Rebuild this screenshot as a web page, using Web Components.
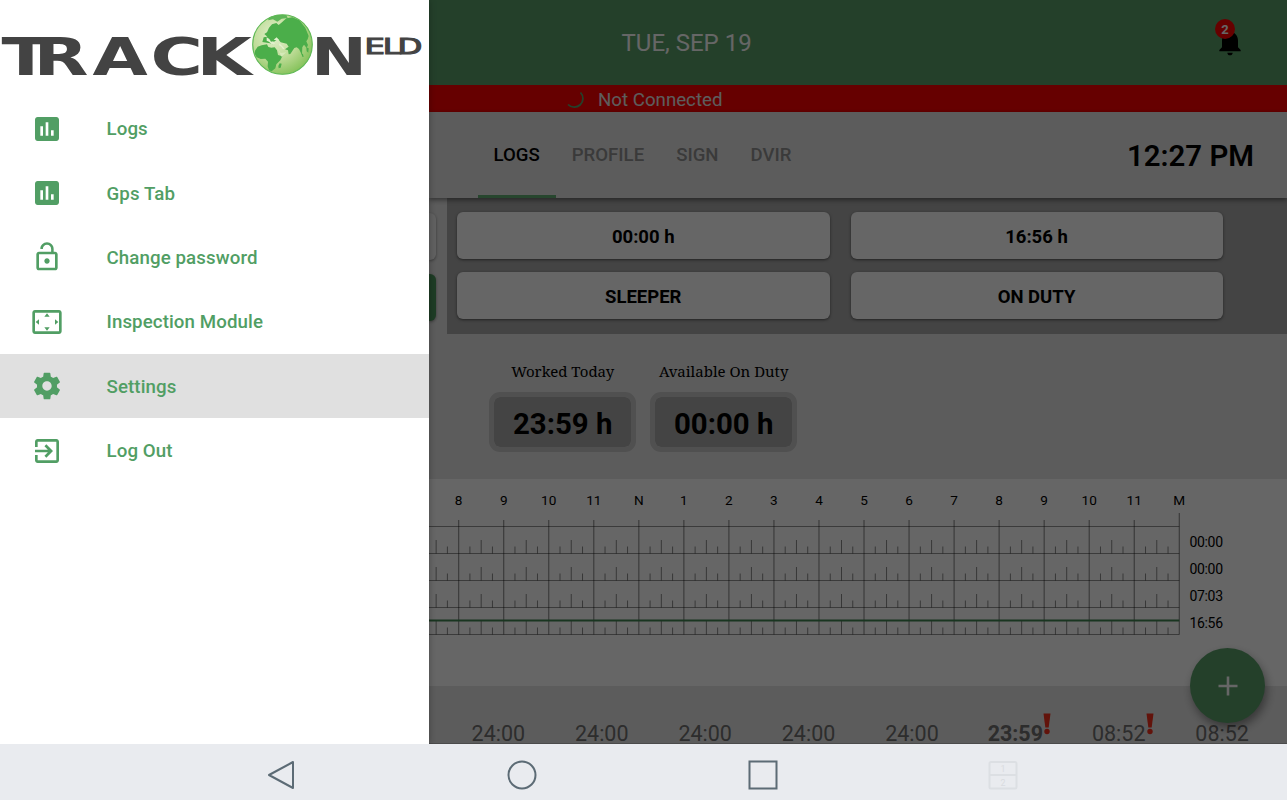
<!DOCTYPE html>
<html lang="en">
<head>
<meta charset="utf-8">
<title>TrackOn ELD</title>
<style>
    body {
        margin: 0;
        width: 1287px;
        height: 800px;
        overflow: hidden;
        font-family: Roboto, "Liberation Sans", sans-serif;
    }
</style>
</head>
<body>
<eld-app></eld-app>

<script>
const GREEN = '#519e64';

const ICONS = {
    chart: 'M19 3H5c-1.1 0-2 .9-2 2v14c0 1.1.9 2 2 2h14c1.1 0 2-.9 2-2V5c0-1.1-.9-2-2-2zM9 17H7v-7h2v7zm4 0h-2V7h2v10zm4 0h-2v-4h2v4z',
    lock: 'M12 17c1.1 0 2-.9 2-2s-.9-2-2-2-2 .9-2 2 .9 2 2 2zm6-9h-1V6c0-2.76-2.24-5-5-5S7 3.24 7 6h1.9c0-1.71 1.39-3.1 3.1-3.1 1.71 0 3.1 1.39 3.1 3.1v2H6c-1.1 0-2 .9-2 2v10c0 1.1.9 2 2 2h12c1.1 0 2-.9 2-2V10c0-1.1-.9-2-2-2zm0 12H6V10h12v10z',
    overscan: 'M12.01 5.5L10 8h4l-1.99-2.5zM18 10v4l2.5-1.99L18 10zM6 10l-2.5 2.01L6 14v-4zm8 6h-4l2.01 2.5L14 16zm7-13H3c-1.1 0-2 .9-2 2v14c0 1.1.9 2 2 2h18c1.1 0 2-.9 2-2V5c0-1.1-.9-2-2-2zm0 16.01H3V4.99h18v14.02z',
    gear: 'M19.43 12.98c.04-.32.07-.64.07-.98s-.03-.66-.07-.98l2.11-1.65c.19-.15.24-.42.12-.64l-2-3.46c-.12-.22-.39-.3-.61-.22l-2.49 1c-.52-.4-1.08-.73-1.69-.98l-.38-2.65C14.46 2.18 14.25 2 14 2h-4c-.25 0-.46.18-.49.42l-.38 2.65c-.61.25-1.17.59-1.69.98l-2.49-1c-.23-.09-.49 0-.61.22l-2 3.46c-.13.22-.07.49.12.64l2.11 1.65c-.04.32-.07.65-.07.98s.03.66.07.98l-2.11 1.65c-.19.15-.24.42-.12.64l2 3.46c.12.22.39.3.61.22l2.49-1c.52.4 1.08.73 1.69.98l.38 2.65c.03.24.24.42.49.42h4c.25 0 .46-.18.49-.42l.38-2.65c.61-.25 1.17-.59 1.69-.98l2.49 1c.23.09.49 0 .61-.22l2-3.46c.12-.22.07-.49-.12-.64l-2.11-1.65zM12 15.5c-1.93 0-3.5-1.57-3.5-3.5s1.57-3.5 3.5-3.5 3.5 1.57 3.5 3.5-1.57 3.5-3.5 3.5z',
    exit: 'M10.09 15.59L11.5 17l5-5-5-5-1.41 1.41L12.67 11H3v2h9.67l-2.58 2.59zM19 3H5c-1.11 0-2 .9-2 2v4h2V5h14v14H5v-4H3v4c0 1.1.89 2 2 2h14c1.1 0 2-.9 2-2V5c0-1.1-.9-2-2-2z',
    bell: 'M12 22c1.1 0 2-.9 2-2h-4c0 1.1.89 2 2 2zm6-6v-5c0-3.07-1.64-5.64-4.5-6.32V4c0-.83-.67-1.5-1.5-1.5s-1.5.67-1.5 1.5v.68C7.63 5.36 6 7.92 6 11v5l-2 2v1h16v-1l-2-2z'
};

class BaseElement extends HTMLElement {
    constructor() {
        super();
        this.attachShadow({ mode: 'open' });
    }
    connectedCallback() {
        this.shadowRoot.innerHTML = this.render();
    }
}

class MdIcon extends BaseElement {
    render() {
        return `
            <style>
                :host { display: block; width: 32px; height: 32px; }
                svg { display: block; width: 100%; height: 100%; fill: currentColor; }
            </style>
            <svg viewBox="0 0 24 24"><path d="${ICONS[this.getAttribute('name')]}"/></svg>
        `;
    }
}
customElements.define('md-icon', MdIcon);

class BrandLogo extends BaseElement {
    render() {
        return `
            <style>
                :host { display: block; height: 96.5px; }
                svg { display: block; }
                text { font-family: "DejaVu Sans", sans-serif; font-weight: bold; fill: #434343; }
            </style>
            <svg width="428" height="96" viewBox="0 0 428 96">
                <defs>
                    <radialGradient id="sea" cx="38%" cy="35%" r="70%">
                        <stop offset="0" stop-color="#e2f0cd"/>
                        <stop offset=".55" stop-color="#bfdc98"/>
                        <stop offset="1" stop-color="#83c158"/>
                    </radialGradient>
                    <clipPath id="disc"><circle cx="282.5" cy="44.5" r="30"/></clipPath>
                </defs>
                <text transform="translate(0 75) scale(1.4 1)" font-size="51" x="1 24 66 107.5 140.3">TRACK</text>
                <circle cx="282.5" cy="44.5" r="30" fill="url(#sea)"/>
                <g clip-path="url(#disc)">
                    <g transform="translate(240 10) scale(.3333)" fill="#4bae4a">
                        <path d="M45 122l8-12 12-4 16-3 4 8 9 2 10-1 7 9 3 14 13 4-6 12-12 12-3 12-11 9-8-3-4-12 1-14-8-9-14 1-12-5-6-11z"/>
                        <path d="M67 96l4-14 11-2-9-8 8-5 6-14 9-10 13-4 7 6 10-8 13-12 18-3 21 9 18 22 10 25-3 10-4 6 5 11-4 9-8-10-5 8-1 23-9-18-7-5-7 2-12 18-5 1-2-12-9-3 11-8-6-9-18-4-8-10-12 8-3 8-9-3z"/>
                        <path d="M85 22l20-9 34 2 4 9-18 2-13 9-13-7-14 3z" opacity=".85"/>
                        <path d="M119 160l6 1-3 12-6 2-1-7zM199 112l7 3-1 13-5-4zM184 130l5 2 2 9-4-1z"/>
                        <path d="M111 111l11 18 17-2-15 13z" fill="#d5e9b8"/>
                        <path d="M80 82l8 5 5 8 7-1 5 8-10 1-8-8-7-3zM101 89l9-7 7 8-8 1z" fill="#e2f0cd"/>
                        <path d="M117 100l6 4 11 12-5 2-5-8-7-4z" fill="#e2f0cd"/>
                    </g>
                </g>
                <circle cx="282.5" cy="44.5" r="29.8" fill="none" stroke="#5fb957" stroke-width="1.1"/>
                <text transform="translate(311 75) scale(1.31 1)" font-size="51">N</text>
                <text style="font-weight: normal" stroke="#434343" stroke-width="1.1" transform="translate(364.500 53.700) scale(1.5 1)" font-size="21.5" x="0 12.200 22">ELD</text>
            </svg>
        `;
    }
}
customElements.define('brand-logo', BrandLogo);

class DrawerItem extends BaseElement {
    render() {
        return `
            <style>
                :host {
                    display: flex;
                    align-items: center;
                    height: 64.4px;
                    box-sizing: border-box;
                    padding: 1px 0 0 31px;
                    color: ${GREEN};
                    font-size: 18.7px;
                    font-weight: 500;
                    letter-spacing: .1px;
                }
                :host([selected]) { background: #e0e0e0; }
                md-icon { margin: 0 43.5px 1px 0; }
            </style>
            <md-icon name="${this.getAttribute('icon')}"></md-icon>
            <span><slot></slot></span>
        `;
    }
}
customElements.define('drawer-item', DrawerItem);

class NavDrawer extends BaseElement {
    render() {
        return `
            <style>
                :host {
                    display: block;
                    width: 428.5px;
                    flex: none;
                    height: 744px;
                    background: #fff;
                    position: relative;
                    z-index: 2;
                    box-shadow: 0 0 7px rgba(0,0,0,.3);
                }
            </style>
            <brand-logo></brand-logo>
            <nav>
                <drawer-item icon="chart">Logs</drawer-item>
                <drawer-item icon="chart">Gps Tab</drawer-item>
                <drawer-item icon="lock">Change password</drawer-item>
                <drawer-item icon="overscan">Inspection Module</drawer-item>
                <drawer-item icon="gear" selected>Settings</drawer-item>
                <drawer-item icon="exit">Log Out</drawer-item>
            </nav>
        `;
    }
}
customElements.define('nav-drawer', NavDrawer);

class DateHeader extends BaseElement {
    render() {
        return `
            <style>
                :host {
                    display: flex;
                    justify-content: space-between;
                    align-items: center;
                    height: 85px;
                    box-sizing: border-box;
                    padding: 0 41px 0 193px;
                    background: #5aa06a;
                    color: #fff;
                }
                .date { font-size: 24px; padding-top: 1px; }
                .alerts { position: relative; color: #000; margin-bottom: 2px; }
                .count {
                    position: absolute;
                    top: -7px;
                    left: 1px;
                    width: 20px;
                    height: 20px;
                    border-radius: 50%;
                    background: #f00;
                    color: #fff;
                    font: bold 13px/21px Roboto, sans-serif;
                    text-align: center;
                }
            </style>
            <div class="date">TUE, SEP 19</div>
            <div class="alerts"><md-icon name="bell"></md-icon><span class="count">2</span></div>
        `;
    }
}
customElements.define('date-header', DateHeader);

class ConnectionBar extends BaseElement {
    render() {
        return `
            <style>
                :host {
                    display: flex;
                    align-items: center;
                    gap: 13px;
                    height: 27px;
                    padding-left: 138.5px;
                    background: #f00;
                    color: #e8e8e8;
                    font-size: 18.7px;
                }
                span { padding-top: 2px; }
            </style>
            <svg width="18" height="20" fill="none" stroke="#5aa06a" stroke-width="1.8"><path d="M13.500 3.500A8 8 0 0 1 1 15.500"/></svg>
            <span>Not Connected</span>
        `;
    }
}
customElements.define('connection-bar', ConnectionBar);

class TabBar extends BaseElement {
    render() {
        return `
            <style>
                :host {
                    display: flex;
                    height: 86px;
                    box-sizing: border-box;
                    padding: 0 33px 0 49px;
                    background: #e6e6e6;
                    box-shadow: 0 2px 5px rgba(0,0,0,.45);
                    position: relative;
                    z-index: 1;
                }
                .tab {
                    display: flex;
                    align-items: center;
                    padding: 3px 16px 0;
                    border-bottom: 3px solid transparent;
                    font-size: 18.6px;
                    font-weight: 500;
                    color: #929292;
                }
                .tab.active { color: #000; border-color: #61ae74; }
                .clock { margin: auto 0 auto auto; padding-top: 2px; font-size: 29.4px; font-weight: 600; }
            </style>
            <div class="tab active">LOGS</div>
            <div class="tab">PROFILE</div>
            <div class="tab">SIGN</div>
            <div class="tab">DVIR</div>
            <div class="clock">12:27 PM</div>
        `;
    }
}
customElements.define('tab-bar', TabBar);

class DutyPanel extends BaseElement {
    render() {
        return `
            <style>
                :host { display: flex; height: 136px; background: #e6e6e6; }
                .edge { width: 18px; display: grid; grid-template-rows: 47px 47px; row-gap: 14px; padding-top: 15px; box-sizing: border-box; }
                .edge i { width: 7px; border-radius: 0 6px 6px 0; background: #f2f2f2; box-shadow: 0 1px 3px rgba(0,0,0,.4); }
                .edge i + i { background: #4b965c; }
                .grid {
                    flex: 1;
                    display: grid;
                    grid-template-columns: 372.5px 372px;
                    grid-template-rows: 47px 47px;
                    gap: 13px 21px;
                    padding: 14px 0 0 10.500px;
                    background: #aaa;
                }
                .cell {
                    display: flex;
                    align-items: center;
                    justify-content: center;
                    border-radius: 6px;
                    background: #fff;
                    box-shadow: 0 1px 3px rgba(0,0,0,.5);
                    font-size: 18.5px;
                    font-weight: bold;
                    padding-top: 2px;
                    box-sizing: border-box;
                }
            </style>
            <div class="edge"><i></i><i></i></div>
            <div class="grid">
                <div class="cell">00:00 h</div>
                <div class="cell">16:56 h</div>
                <div class="cell">SLEEPER</div>
                <div class="cell">ON DUTY</div>
            </div>
        `;
    }
}
customElements.define('duty-panel', DutyPanel);

class HourCounter extends BaseElement {
    render() {
        return `
            <style>
                :host { display: flex; flex-direction: column; align-items: center; width: 147px; }
                .label { height: 31px; white-space: nowrap; font: 15px/20px "Noto Serif", "DejaVu Serif Condensed", "DejaVu Serif", serif; }
                .value {
                    width: 137px;
                    height: 50px;
                    border: 5px solid #c7c7c7;
                    border-radius: 11px;
                    background: #aaa;
                    background-clip: padding-box;
                    font-size: 29.4px;
                    font-weight: bold;
                    line-height: 54px;
                    text-align: center;
                }
            </style>
            <div class="label">${this.getAttribute('label')}</div>
            <div class="value"><slot></slot></div>
        `;
    }
}
customElements.define('hour-counter', HourCounter);

class DutyGraph extends BaseElement {
    render() {
        const names = ['7', '8', '9', '10', '11', 'N', '1', '2', '3', '4', '5', '6', '7', '8', '9', '10', '11', 'M'];
        const totals = ['00:00', '00:00', '07:03', '16:56'];
        const step = 45.04;
        const right = 750.3;
        const top = 47.5;
        const row = 27;
        let lines = '';
        let ticks = '';
        let labels = '';

        for (let r = 0; r <= 4; r++) {
            lines += `<path d="M0 ${top + r * row}H${right}"/>`;
        }
        names.forEach((name, i) => {
            const x = right - (names.length - 1 - i) * step;
            const last = name === 'M';
            if (i > 0) {
                labels += `<text x="${x}" y="25.600" text-anchor="middle">${name}</text>`;
                lines += `<path d="M${x} ${last ? 34 : 41}V${top + 4 * row}"/>`;
            }
            if (last) return;
            // quarter-hour marks stand on the bottom of each row
            for (let r = 1; r <= 4; r++) {
                const y = top + r * row;
                for (let q = 1; q < 4; q++) {
                    ticks += `<path d="M${x + q * step / 4} ${y}v${q === 2 ? -13.5 : -7}"/>`;
                }
            }
        });
        totals.forEach((t, i) => {
            labels += `<text x="760.500" y="${68.3 + i * 26.8}" style="font-size:14px" textLength="33.500">${t}</text>`;
        });

        return `
            <style>
                :host { display: block; height: 207px; background: #fff; }
                svg { display: block; }
                text { font-size: 13.6px; fill: #000; }
            </style>
            <svg width="858" height="207">
                <g stroke="#000" stroke-opacity=".42" stroke-width="1.2">${lines}</g>
                <g stroke="#000" stroke-opacity=".46">${ticks}</g>
                <path d="M0 141.500H${right}" stroke="#3f8450" stroke-width="2"/>
                ${labels}
            </svg>
        `;
    }
}
customElements.define('duty-graph', DutyGraph);

class DayStrip extends BaseElement {
    render() {
        const days = [['24:00'], ['24:00'], ['24:00'], ['24:00'], ['24:00'], ['23:59', 'today warn'], ['08:52', 'warn'], ['08:52']];
        const mark = '<svg width="8" height="22" fill="#f5301c"><path d="M.5 .5h7L5.700 14.500H2.300z"/><circle cx="4" cy="18.500" r="2.700"/></svg>';
        return `
            <style>
                :host {
                    display: grid;
                    grid-template-columns: repeat(8, 103.4px);
                    height: 58px;
                    padding-left: 18.200px;
                    background: #e6e6e6;
                    overflow: hidden;
                    box-sizing: border-box;
                    border-bottom: 1px solid #bbb;
                }
                .day { text-align: center; padding-top: 34.5px; font-size: 21.500px; line-height: 26px; color: #707070; }
                .today { font-weight: bold; }
                .day span { position: relative; }
                svg { position: absolute; left: 100%; top: -8px; }
            </style>
            ${days.map(([t, cls = '']) => `<div class="day ${cls}"><span>${t}${cls.includes('warn') ? mark : ''}</span></div>`).join('')}
        `;
    }
}
customElements.define('day-strip', DayStrip);

class LogScreen extends BaseElement {
    render() {
        return `
            <style>
                :host { display: block; flex: 1; height: 744px; position: relative; overflow: hidden; background: #e6e6e6; }
                .counters { display: flex; gap: 14px; height: 145px; box-sizing: border-box; padding: 27px 0 0 60.7px; }
                .fab {
                    position: absolute;
                    right: 22px;
                    top: 648px;
                    width: 75px;
                    height: 75px;
                    border-radius: 50%;
                    background: #5aa06a;
                    box-shadow: 2px 5px 10px rgba(0,0,0,.4);
                    display: grid;
                    place-items: center;
                }
                .scrim { position: absolute; inset: 0; z-index: 2; background: rgba(0,0,0,.6); }
            </style>
            <date-header></date-header>
            <connection-bar></connection-bar>
            <tab-bar></tab-bar>
            <duty-panel></duty-panel>
            <div class="counters">
                <hour-counter label="Worked Today">23:59 h</hour-counter>
                <hour-counter label="Available On Duty">00:00 h</hour-counter>
            </div>
            <duty-graph></duty-graph>
            <day-strip></day-strip>
            <div class="fab"><svg width="20" height="20" stroke="#fff" stroke-width="2.6"><path d="M10 .5v19M.5 10h19"/></svg></div>
            <div class="scrim"></div>
        `;
    }
}
customElements.define('log-screen', LogScreen);

class SystemBar extends BaseElement {
    render() {
        return `
            <style>
                :host {
                    display: grid;
                    grid-template-columns: repeat(4, 240.7px);
                    place-items: center;
                    height: 56px;
                    padding-left: 161px;
                    padding-top: 5px;
                    box-sizing: border-box;
                    background: #e9ebef;
                }
                svg { display: block; fill: none; stroke: #5c6b75; stroke-width: 2; }
                text { font-size: 9px; stroke: none; fill: #d9dce0; text-anchor: middle; }
            </style>
            <svg width="30" height="30"><path d="M3 15L27 2v26z" stroke-linejoin="round"/></svg>
            <svg width="30" height="30"><circle cx="15" cy="15" r="13.500"/></svg>
            <svg width="30" height="30"><path d="M1.500 1.500h27v27h-27z"/></svg>
            <svg width="30" height="30" style="stroke:#dcdfe3">
                <rect x="1.500" y="2" width="27" height="26.500" rx="1.500"/><path d="M1.500 15h27"/>
                <text x="15" y="12">1</text><text x="15" y="25.500">2</text>
            </svg>
        `;
    }
}
customElements.define('system-bar', SystemBar);

class EldApp extends BaseElement {
    render() {
        return `
            <style>
                :host { display: block; width: 1287px; height: 800px; }
                .screen { display: flex; height: 744px; overflow: hidden; }
            </style>
            <div class="screen">
                <nav-drawer></nav-drawer>
                <log-screen></log-screen>
            </div>
            <system-bar></system-bar>
        `;
    }
}
customElements.define('eld-app', EldApp);
</script>
</body>
</html>
